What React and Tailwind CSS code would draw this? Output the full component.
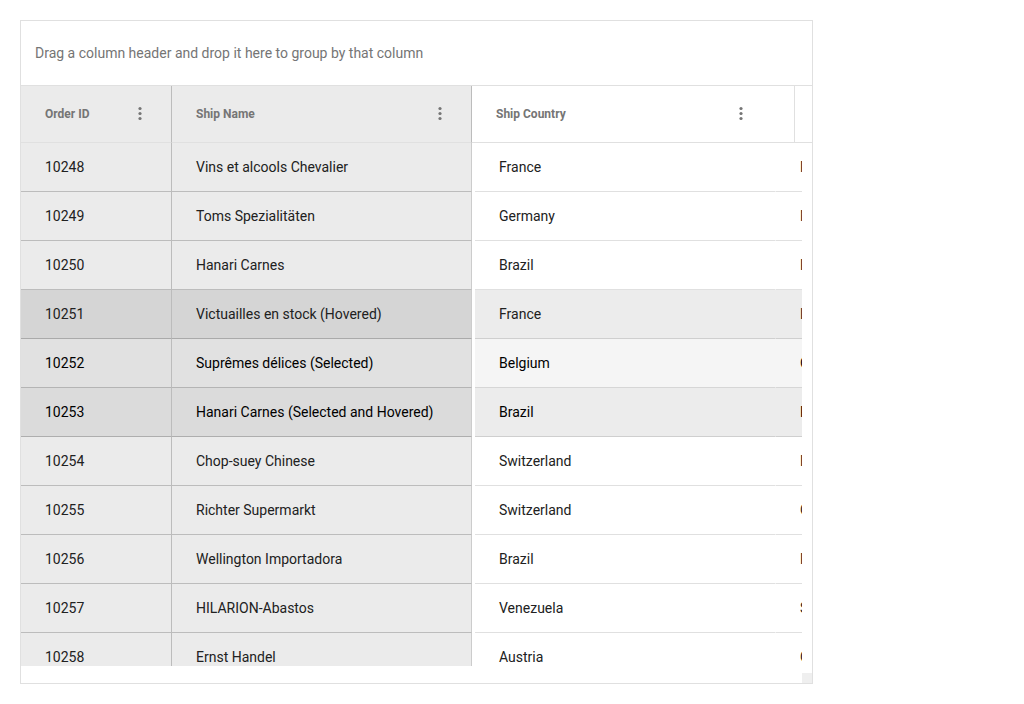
const rows = [
  { id: 10248, name: 'Vins et alcools Chevalier', country: 'France', city: 'Reims' },
  { id: 10249, name: 'Toms Spezialitäten', country: 'Germany', city: 'Münster' },
  { id: 10250, name: 'Hanari Carnes', country: 'Brazil', city: 'Rio de Janeiro' },
  { id: 10251, name: 'Victuailles en stock (Hovered)', country: 'France', city: 'Lyon', state: 'hovered' },
  { id: 10252, name: 'Suprêmes délices (Selected)', country: 'Belgium', city: 'Charleroi', state: 'selected' },
  { id: 10253, name: 'Hanari Carnes (Selected and Hovered)', country: 'Brazil', city: 'Rio de Janeiro', state: 'both' },
  { id: 10254, name: 'Chop-suey Chinese', country: 'Switzerland', city: 'Bern' },
  { id: 10255, name: 'Richter Supermarkt', country: 'Switzerland', city: 'Genève' },
  { id: 10256, name: 'Wellington Importadora', country: 'Brazil', city: 'Resende' },
  { id: 10257, name: 'HILARION-Abastos', country: 'Venezuela', city: 'San Cristóbal' },
  { id: 10258, name: 'Ernst Handel', country: 'Austria', city: 'Graz' },
];

const lockedTone = {
  normal: 'bg-[#ebebeb] border-b-[#bcbcbc] text-[#212121]',
  hovered: 'bg-[#d5d5d5] border-b-[#aaaaaa] text-[#212121]',
  selected: 'bg-[#e1e1e1] border-b-[#b4b4b4] text-black',
  both: 'bg-[#dbdbdb] border-b-[#aeaeae] text-black',
};

const freeTone = {
  normal: 'bg-white border-b-[#e0e0e0] text-[#212121]',
  hovered: 'bg-[#ececec] border-b-[#cfcfcf] text-[#212121]',
  selected: 'bg-[#f5f5f5] border-b-[#d6d6d6] text-black',
  both: 'bg-[#ececec] border-b-[#cfcfcf] text-black',
};

function HeaderContent({ title }) {
  return (
    <div className="flex items-center justify-between">
      <span>{title}</span>
      <button type="button" aria-label={`${title} column menu`} className="block">
        <svg viewBox="0 0 20 20" className="block size-5" fill="currentColor" aria-hidden="true">
          <circle cx="10" cy="4.5" r="1.6" />
          <circle cx="10" cy="9.5" r="1.6" />
          <circle cx="10" cy="14.5" r="1.6" />
        </svg>
      </button>
    </div>
  );
}

const headCell = 'h-[57px] border-b border-b-[#e0e0e0] p-0 pl-6 text-left text-xs font-bold text-[#757575]';
const bodyCell = 'h-[49px] border-b p-0 pl-6 text-sm whitespace-nowrap';
const tableBase = 'w-full table-fixed border-separate border-spacing-0';

export default function App() {
  return (
    <main className="p-5 font-['Roboto',sans-serif]">
      <div className="w-full max-w-[793px] border border-[#e0e0e0] bg-white">
        <div className="flex h-16 items-center px-3.5 text-sm text-[#757575]">
          Drag a column header and drop it here to group by that column
        </div>

        <div className="flex border-t border-[#e0e0e0]">
          <div className="h-[580px] w-[451px] shrink-0 overflow-hidden">
            <table className={tableBase}>
              <colgroup>
                <col className="w-[151px]" />
                <col />
              </colgroup>
              <thead>
                <tr>
                  <th scope="col" className={`${headCell} border-r border-r-[#bcbcbc] bg-[#ebebeb] pr-[21px]`}>
                    <HeaderContent title="Order ID" />
                  </th>
                  <th scope="col" className={`${headCell} border-r border-r-[#bcbcbc] bg-[#ebebeb] pr-[21px]`}>
                    <HeaderContent title="Ship Name" />
                  </th>
                </tr>
              </thead>
              <tbody>
                {rows.map((row) => (
                  <tr key={row.id}>
                    <td className={`${bodyCell} border-r border-r-[#bcbcbc] ${lockedTone[row.state ?? 'normal']}`}>{row.id}</td>
                    <td className={`${bodyCell} border-r border-r-[#cccccc] ${lockedTone[row.state ?? 'normal']}`}>{row.name}</td>
                  </tr>
                ))}
              </tbody>
            </table>
          </div>

          <div className="min-w-0 flex-1">
            <table className={tableBase}>
              <colgroup>
                <col className="w-[323px]" />
                <col />
              </colgroup>
              <thead>
                <tr>
                  <th scope="col" className={`${headCell} border-r border-r-[#e0e0e0] pr-[43px]`}>
                    <HeaderContent title="Ship Country" />
                  </th>
                  <td className="border-b border-[#e0e0e0] p-0" />
                </tr>
              </thead>
            </table>
            <div className="mr-2.5 ml-[3px] h-[523px] overflow-hidden">
              <table className={tableBase} aria-label="Ship Country">
                <colgroup>
                  <col className="w-[300px]" />
                  <col />
                </colgroup>
                <tbody>
                  {rows.map((row) => (
                    <tr key={row.id}>
                      <td className={`${bodyCell} ${freeTone[row.state ?? 'normal']}`}>{row.country}</td>
                      <td className={`${bodyCell} overflow-hidden border-l border-l-transparent ${freeTone[row.state ?? 'normal']}`}>
                        {row.city}
                      </td>
                    </tr>
                  ))}
                </tbody>
              </table>
            </div>
          </div>
        </div>

        <div className="flex h-[17px] items-end justify-end">
          <div className="size-2.5 bg-[#efefef]" />
        </div>
      </div>
    </main>
  );
}
